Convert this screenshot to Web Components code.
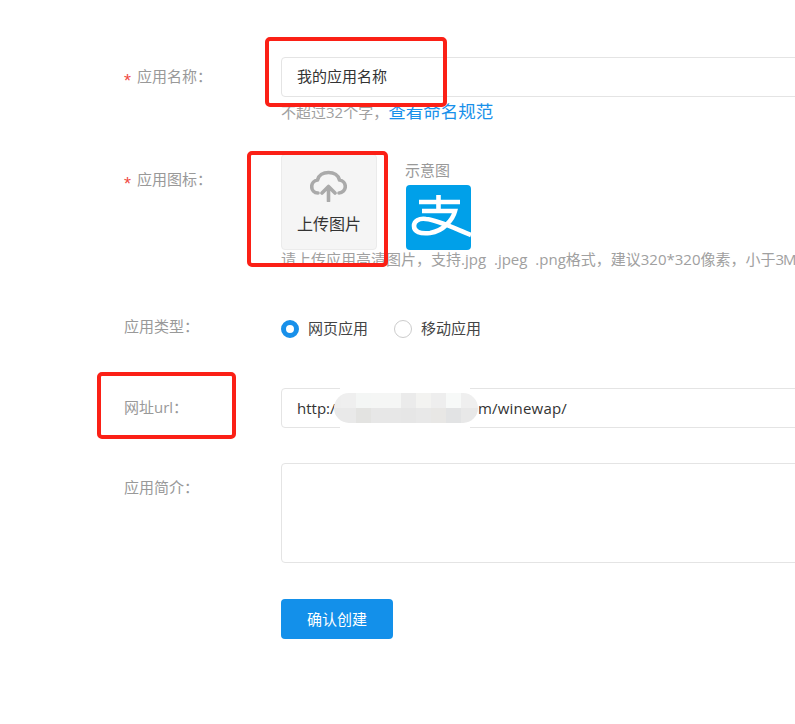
<!DOCTYPE html>
<html lang="zh"><head><meta charset="utf-8">
<style>
html,body{margin:0;padding:0;background:#fff;overflow:hidden;height:724px}
body{font-family:"Open Sans","Noto Sans CJK SC",sans-serif;font-size:15px;color:#333}
</style></head>
<body>
<app-form></app-form>
<script>
(()=>{
const def=(name,html,init)=>customElements.define(name,class extends HTMLElement{
  constructor(){super();this.attachShadow({mode:'open'}).innerHTML=html;if(init)init(this.shadowRoot);}
});
def('form-row',`<style>
:host{display:grid;grid-template-columns:281px 600px;}
.l{padding-left:124px;font-size:15px;color:#999;line-height:40px;margin-top:var(--label-shift,0px);white-space:nowrap}
</style><div class="l"><slot name="label"></slot></div><div><slot></slot></div>`);
def('req-mark',`<style>:host{display:inline-block;width:13px;color:#f04a44;font-family:"Liberation Sans",sans-serif;font-size:18px;line-height:1;position:relative;top:5px}</style>*`);
def('text-box',`<style>:host{display:flex;align-items:center;box-sizing:border-box;width:600px;height:40px;border:1px solid #e4e4e4;border-radius:4px;padding-left:15px;font-size:15px;color:#333;background:#fff;white-space:nowrap}</style><slot></slot>`);
def('area-box',`<style>:host{display:block;box-sizing:border-box;width:600px;height:100px;border:1px solid #e4e4e4;border-radius:4px;background:#fff}</style>`);
def('hint-text',`<style>:host{display:block;font-size:15px;color:#a0a0a0;white-space:nowrap}</style><slot></slot>`);
def('upload-box',`<style>:host{display:flex;flex-direction:column;align-items:center;box-sizing:border-box;width:96px;height:96px;background:#f5f5f5;border:1px solid #ebebeb;border-radius:4px;padding-top:13px;font-size:16px;line-height:22px;color:#333}
svg{display:block;margin-bottom:11px;margin-right:2px}</style>
<svg width="37" height="34" viewBox="0 0 37 34" fill="none" stroke="#aaa" stroke-width="3.6" stroke-linecap="round" stroke-linejoin="round"><path d="M8 25C4 25 1.700 22 1.700 18.500C1.700 15 4.300 12.500 7.500 12C8.500 7.500 13 4.500 18.500 4.500C24 4.500 28.500 7.500 29.500 12C32.700 12.500 35.300 15 35.300 18.500C35.300 22 32.500 25 29 25"/><path d="M18.500 33V19M12 25L18.500 18.500L25 25"/></svg><slot></slot>`);
def('alipay-logo',`<style>:host{display:block;width:65px;height:65px}svg{display:block}</style>
<svg width="65" height="65" viewBox="0 0 65 65"><rect width="65" height="65" rx="4" fill="#00a0e9"/>
<g fill="none" stroke="#fff" stroke-width="4.600">
<path d="M13 17H54M32.500 10V26M16 26H49C47 34 38 46 24 48C14 49 8 47 8 41C8 36 13 33 20 34C32 35 50 44 65 50"/>
</g></svg>`);
def('radio-dot',`<style>:host{display:block;box-sizing:border-box;width:18px;height:18px;border-radius:50%;border:1px solid #ccc;background:#fff;flex:none}
:host([on]){border:5px solid #1890ea}</style>`);
def('radio-group',`<style>:host{display:flex;align-items:center;height:40px;font-size:15px;color:#444;gap:26px}
.o{display:flex;align-items:center;gap:9px}
span{padding-bottom:3px}</style>
<div class="o"><radio-dot on></radio-dot><span>网页应用</span></div><div class="o"><radio-dot></radio-dot><span>移动应用</span></div>`);
def('primary-button',`<style>:host{display:flex;align-items:center;justify-content:center;width:112px;height:40px;background:#1390ea;color:#fff;border-radius:4px;font-size:15px;padding-bottom:2px;box-sizing:border-box}</style><slot></slot>`);
def('red-mark',`<style>:host{position:absolute;box-sizing:border-box;border:4px solid #fb2016;border-radius:5px;pointer-events:none}</style>`);
const upper=['#eeeeee','#efefef','#f4f6f5','#f5f6f5','#f5f6f5','#ebebeb','#f3f3f1','#eeeeee','#f7f9f8','#efefef'];
const lower=['#e9e9e9','#e9e9e9','#e3e3e1','#e7e7e7','#e7e7e7','#e6e6e6','#e8e8e8','#e8e7e5','#e2e3e4','#e8e8e8'];
def('blur-patch',`<style>:host{display:flex;align-items:center;position:relative;flex:none;width:144px;height:40px}
.halo{position:absolute;left:6px;right:8px;top:0;bottom:0;background:#fff}
.g{position:relative;display:grid;width:144px;height:30px;border-radius:15px;overflow:hidden;grid-template-columns:7px repeat(8,15px) 17px;grid-template-rows:15px 15px}</style>
<div class="halo"></div><div class="g"></div>`,r=>{const g=r.querySelector('.g');[...upper,...lower].forEach(c=>{const d=document.createElement('div');d.style.background=c;g.appendChild(d);});});
def('app-form',`<style>
:host{display:block;position:relative;width:795px;height:724px;overflow:hidden;padding-top:57px;box-sizing:border-box}
.name-hint{margin-top:2px;line-height:24px;height:24px}
.name-hint a{font-size:17.5px;color:#1890ea;text-decoration:none}
.up{display:flex;gap:28px}
.sample{display:flex;flex-direction:column;padding-top:9px;font-size:15px;color:#999;line-height:15px;gap:7px}
.sample alipay-logo{margin-left:1px}
.hint2{line-height:18px;word-spacing:4px}
.hint2 b{font-weight:400;letter-spacing:-1px}
.pre{display:block;width:37px;flex:none}
.cjk{padding-bottom:3px}
.url{letter-spacing:.2px}
.r1{--label-shift:-1px;margin-bottom:31px}.r2{--label-shift:5px;margin-bottom:41px}
.r3{--label-shift:-3px;margin-bottom:39px}.r4{--label-shift:-1px;margin-bottom:35px}.r5{--label-shift:4px;margin-bottom:36px}
</style>
<form-row class="r1"><span slot="label"><req-mark></req-mark>应用名称：</span>
<text-box><span class="cjk">我的应用名称</span></text-box><hint-text class="name-hint">不超过32个字，<a>查看命名规范</a></hint-text></form-row>
<form-row class="r2"><span slot="label"><req-mark></req-mark>应用图标：</span>
<div class="up"><upload-box>上传图片</upload-box><div class="sample"><span>示意图</span><alipay-logo></alipay-logo></div></div>
<hint-text class="hint2">请上传应用高清图片，支持.jpg .jpeg .png格式，建议320*320像素，小于<b>3M</b></hint-text></form-row>
<form-row class="r3"><span slot="label">应用类型：</span><radio-group></radio-group></form-row>
<form-row class="r4"><span slot="label">网址url：</span><text-box><span class="pre">http:/</span><blur-patch></blur-patch><span class="url">m/winewap/</span></text-box></form-row>
<form-row class="r5"><span slot="label">应用简介：</span><area-box></area-box></form-row>
<form-row><span slot="label"></span><primary-button>确认创建</primary-button></form-row>
<red-mark style="left:265px;top:37px;width:182px;height:70px"></red-mark>
<red-mark style="left:247px;top:151px;width:141px;height:116px"></red-mark>
<red-mark style="left:97px;top:372px;width:139px;height:67px"></red-mark>
`);
})();
</script>
</body></html>
